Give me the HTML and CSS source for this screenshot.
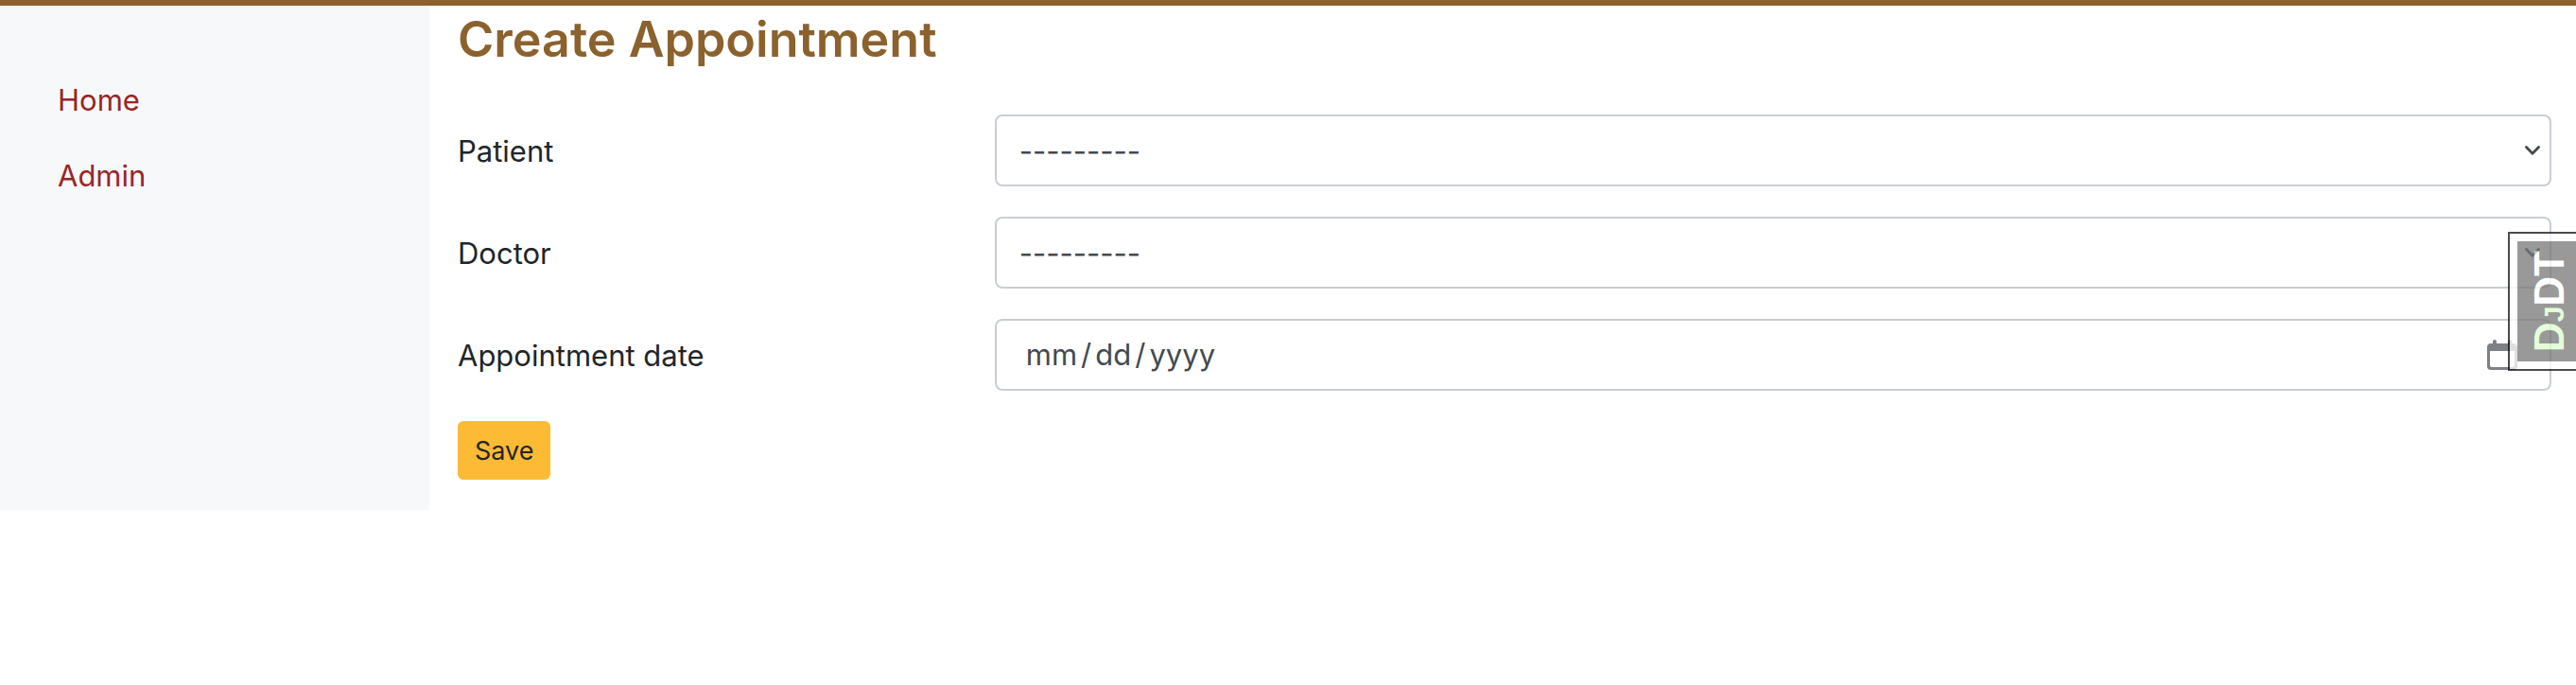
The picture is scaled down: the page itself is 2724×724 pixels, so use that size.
FILE: index.html
```html
<!DOCTYPE html>
<html lang="en-US">
<head>
<meta charset="utf-8">
<title>Create Appointment</title>
<link rel="stylesheet" href="styles.css">
</head>
<body>
<div class="layout">
  <nav class="sidebar">
    <a class="nav-link" href="#">Home</a>
    <a class="nav-link" href="#">Admin</a>
  </nav>
  <main class="content">
    <h1 class="title">Create Appointment</h1>
    <form class="form">
      <div class="row">
        <label class="label" for="patient">Patient</label>
        <select class="control select" id="patient"><option>---------</option></select>
      </div>
      <div class="row">
        <label class="label" for="doctor">Doctor</label>
        <select class="control select" id="doctor"><option>---------</option></select>
      </div>
      <div class="row">
        <label class="label" for="date">Appointment date</label>
        <input class="control date" id="date" type="date">
      </div>
      <button class="save" type="button">Save</button>
    </form>
  </main>
</div>
<aside class="debug-handle">
  <button class="debug-button" type="button"><span class="green">D</span><span class="green small">J</span>DT</button>
</aside>
</body>
</html>
```
FILE: styles.css
```css
* { box-sizing: border-box; }

body {
  margin: 0;
  border-top: 6px solid #8b622d;
  background: #fff;
  color: #212529;
  font-family: Inter, "Liberation Sans", sans-serif;
  font-size: 31px;
  line-height: 48px;
}

.layout {
  display: grid;
  grid-template-columns: 1fr 5fr;
}

.sidebar {
  display: flex;
  flex-direction: column;
  padding: 60px 30px;
  background: #f7f8fa;
}

.nav-link {
  padding: 16px 31px;
  color: #982626;
  text-decoration: none;
}

.content { padding: 2px 26px 32px 30px; }

.title {
  margin: 0 0 46px;
  color: #8b622d;
  font-size: 52px;
  font-weight: 600;
  line-height: 67px;
}

.form {
  display: flex;
  flex-direction: column;
  align-items: flex-start;
  gap: 32px;
}

.row {
  display: grid;
  grid-template-columns: 1fr 3fr;
  align-items: center;
  gap: 19px;
  width: 100%;
}

.label { padding-top: 2px; }

.control {
  width: 100%;
  height: 76px;
  padding: 13px 24px 11px;
  border: 2px solid #c9ced5;
  border-radius: 8px;
  background: #fff;
  color: #444a50;
  font: inherit;
}

.select {
  appearance: none;
  background: #fff url("data:image/svg+xml,%3Csvg xmlns='http://www.w3.org/2000/svg' width='16' height='10' viewBox='0 0 16 10'%3E%3Cpath d='M1.5 1.5L8 8.3L14.5 1.5' fill='none' stroke='%23444a50' stroke-width='2.8' stroke-linecap='round' stroke-linejoin='round'/%3E%3C/svg%3E") no-repeat right 10px center;
}

.date { padding: 12px 34px 12px 30px; }

.date::-webkit-datetime-edit-text { padding: 0 3px; }

.date::-webkit-calendar-picker-indicator {
  width: 32px;
  height: 32px;
  padding: 0;
  background: url("data:image/svg+xml,%3Csvg xmlns='http://www.w3.org/2000/svg' width='32' height='32' viewBox='0 0 32 32'%3E%3Cpath fill='%237d8187' fill-rule='evenodd' d='M6 4V2a2 2 0 0 1 4 0v2h12V2a2 2 0 0 1 4 0v2h2a4 4 0 0 1 4 4v20a4 4 0 0 1-4 4H4a4 4 0 0 1-4-4V8a4 4 0 0 1 4-4zM3 12v15a2 2 0 0 0 2 2h22a2 2 0 0 0 2-2V12z'/%3E%3C/svg%3E") no-repeat center;
}

.save {
  padding: 11px 18px 9px;
  border: 0;
  border-radius: 6px;
  background: #fdba35;
  color: #212529;
  font: inherit;
  font-size: 27px;
  line-height: 42px;
}

.debug-handle {
  position: fixed;
  top: 245px;
  right: 0;
  padding: 8px 0 8px 8px;
  border: 2px solid #111;
  border-right: 0;
  background: #fff;
  opacity: .75;
}

.debug-button {
  display: block;
  width: 62px;
  height: 127px;
  padding: 0 12px;
  border: 0;
  background: #777;
  color: #fff;
  font: bold 44px/44px "Liberation Sans", Arial, sans-serif;
  text-align: center;
  writing-mode: sideways-lr;
}

.green { color: #dfc; }
.small { font-size: 30px; }
```
